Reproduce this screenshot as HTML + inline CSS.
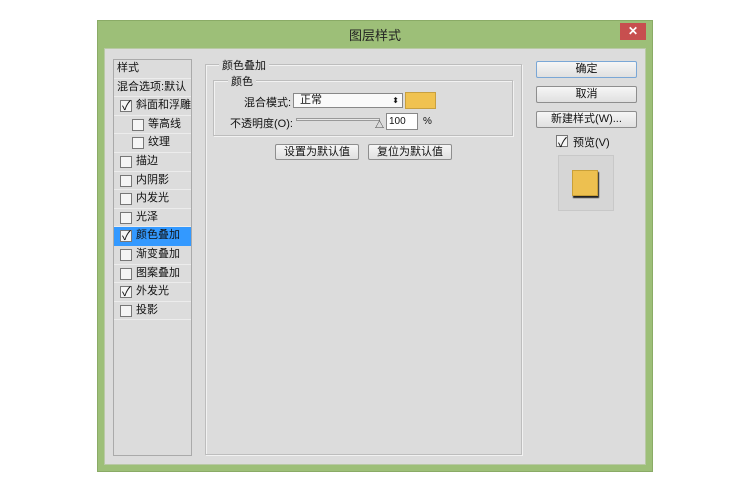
<!DOCTYPE html><html><head><meta charset="utf-8"><style>
*{margin:0;padding:0;box-sizing:border-box}
body{width:750px;height:492px;background:#fff;font-family:"Liberation Sans","Noto Sans CJK SC",sans-serif;font-size:11px;color:#111;position:relative;overflow:hidden}
.a{position:absolute}
#win{left:97px;top:20px;width:556px;height:452px;background:#9dbf78;border:1px solid #8aab66}
#body{left:104px;top:48px;width:542px;height:417px;background:#dcdcdc;border:1px solid #b9c9a5}
.title{left:0;top:25px;width:750px;text-align:center;font-size:13px;color:#222}
#close{left:620px;top:23px;width:26px;height:17px;background:#c74f4f;color:#fff;text-align:center;font-size:12px;line-height:17px;font-weight:bold}
#list{left:113px;top:59px;width:79px;height:397px;border:1px solid #aaa;background:#dcdcdc}
.row{position:absolute;left:0;width:77px;height:18.6px;border-bottom:1px solid #ececec;line-height:17px;font-size:11px}
.cb{position:absolute;top:3px;width:12px;height:12px;border:1px solid #777;background:#f5f5f5}
.ck{position:absolute;top:-4px;left:1px;font-size:13px}
.btn{position:absolute;height:16px;border:1px solid #8e8e8e;border-radius:2px;background:linear-gradient(#f6f6f6,#e0e0e0);text-align:center;line-height:14px;font-size:11px}
.grp{position:absolute;border:1px solid #bdbdbd;box-shadow:1px 1px 0 #f2f2f2 inset,1px 1px 0 #f2f2f2}
.lg{position:absolute;background:#dcdcdc;padding:0 3px;font-size:11px}
</style></head><body>
<div id="win" class="a"></div>
<div class="a title">图层样式</div>
<div id="close" class="a">✕</div>
<div id="body" class="a"></div>
<div id="list" class="a">
<div class="row" style="top:0">&nbsp;样式</div>
<div class="row" style="top:18.6px">&nbsp;混合选项:默认</div>
<div class="row" style="top:37.2px"><div class="cb" style="left:6px"><span class="ck">✓</span></div><span style="position:absolute;left:22px">斜面和浮雕</span></div>
<div class="row" style="top:55.8px"><div class="cb" style="left:18px"></div><span style="position:absolute;left:34px">等高线</span></div>
<div class="row" style="top:74.4px"><div class="cb" style="left:18px"></div><span style="position:absolute;left:34px">纹理</span></div>
<div class="row" style="top:93px"><div class="cb" style="left:6px"></div><span style="position:absolute;left:22px">描边</span></div>
<div class="row" style="top:111.6px"><div class="cb" style="left:6px"></div><span style="position:absolute;left:22px">内阴影</span></div>
<div class="row" style="top:130.2px"><div class="cb" style="left:6px"></div><span style="position:absolute;left:22px">内发光</span></div>
<div class="row" style="top:148.8px"><div class="cb" style="left:6px"></div><span style="position:absolute;left:22px">光泽</span></div>
<div class="row" style="top:167.4px;background:#3399ff;border-color:#3399ff"><div class="cb" style="left:6px"><span class="ck">✓</span></div><span style="position:absolute;left:22px">颜色叠加</span></div>
<div class="row" style="top:186px"><div class="cb" style="left:6px"></div><span style="position:absolute;left:22px">渐变叠加</span></div>
<div class="row" style="top:204.6px"><div class="cb" style="left:6px"></div><span style="position:absolute;left:22px">图案叠加</span></div>
<div class="row" style="top:223.2px"><div class="cb" style="left:6px"><span class="ck">✓</span></div><span style="position:absolute;left:22px">外发光</span></div>
<div class="row" style="top:241.8px"><div class="cb" style="left:6px"></div><span style="position:absolute;left:22px">投影</span></div>
</div>
<div class="grp" style="left:205px;top:64px;width:317px;height:391px"></div>
<div class="lg" style="left:219px;top:57px">颜色叠加</div>
<div class="grp" style="left:213px;top:80px;width:300px;height:56px"></div>
<div class="lg" style="left:228px;top:73px">颜色</div>
<div class="a" style="left:244px;top:94px">混合模式:</div>
<div class="a" style="left:293px;top:93px;width:110px;height:15px;border:1px solid #888;background:#fafafa;line-height:13px;padding-left:6px">正常<span style="position:absolute;right:3px;font-size:8px">⬍</span></div>
<div class="a" style="left:405px;top:92px;width:31px;height:17px;background:#f0c250;border:1px solid #c8a040"></div>
<div class="a" style="left:230px;top:115px">不透明度(O):</div>
<div class="a" style="left:296px;top:118px;width:84px;height:3px;border:1px solid #999;background:#e8e8e8"></div>
<div class="a" style="left:375px;top:118px;font-size:9px">△</div>
<div class="a" style="left:386px;top:113px;width:32px;height:17px;border:1px solid #888;background:#fff;line-height:15px;padding-left:2px;font-size:10px">100</div>
<div class="a" style="left:423px;top:116px;font-size:10px">%</div>
<div class="btn" style="left:275px;top:144px;width:84px">设置为默认值</div>
<div class="btn" style="left:368px;top:144px;width:84px">复位为默认值</div>
<div class="btn" style="left:536px;top:61px;width:101px;height:17px;border-color:#7aa7d6">确定</div>
<div class="btn" style="left:536px;top:86px;width:101px;height:17px">取消</div>
<div class="btn" style="left:536px;top:111px;width:101px;height:17px">新建样式(W)...</div>
<div class="a" style="left:556px;top:135px;width:12px;height:12px;border:1px solid #777;background:#f5f5f5"><span class="ck">✓</span></div>
<div class="a" style="left:573px;top:134px">预览(V)</div>
<div class="a" style="left:558px;top:155px;width:56px;height:56px;border:1px solid #c8c8c8;background:#d6d6d6"></div>
<div class="a" style="left:572px;top:170px;width:26px;height:26px;background:#edc050;border:1px solid #c9a038;box-shadow:1px 2px 1px #222"></div>
</body></html>
